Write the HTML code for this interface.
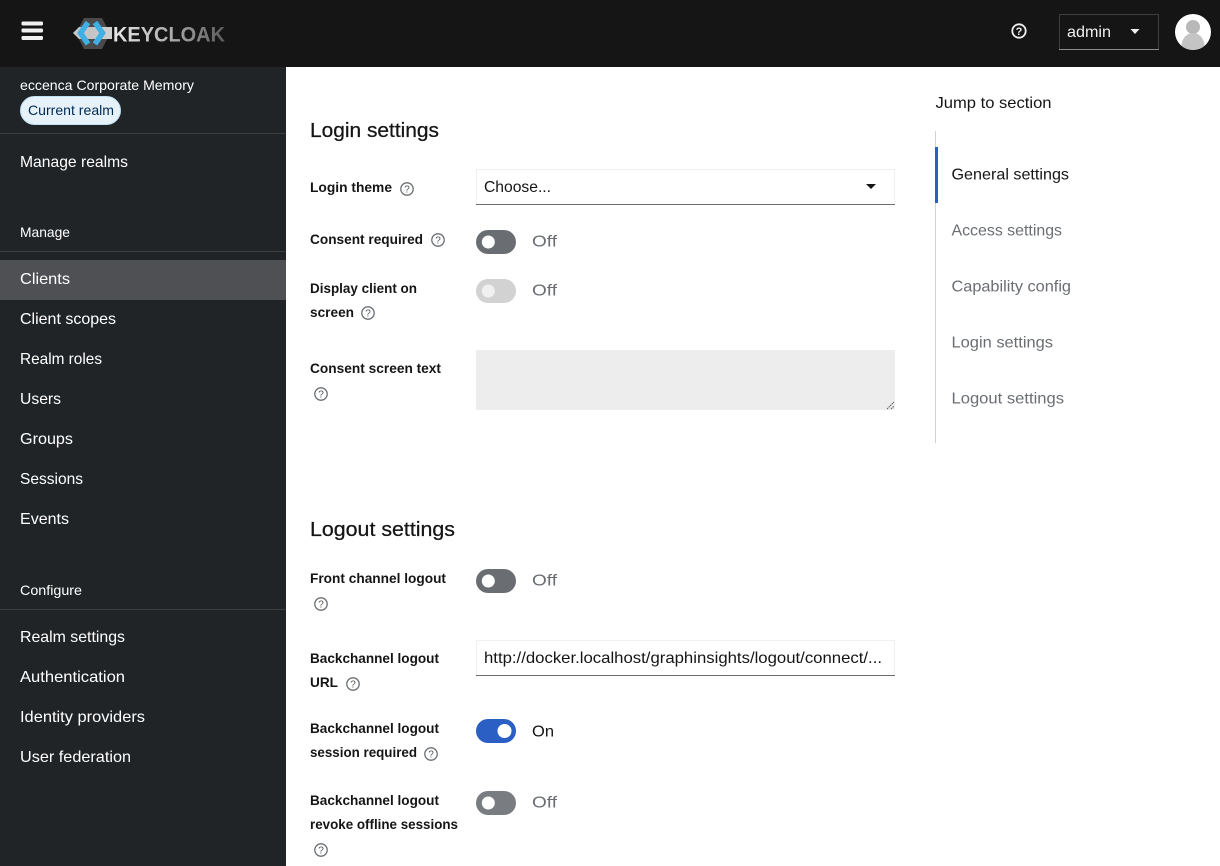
<!DOCTYPE html>
<html lang="en"><head><meta charset="utf-8"><title>Keycloak</title>
<style>
html,body{margin:0;padding:0;width:1220px;height:866px;overflow:hidden;background:#fff}
svg{display:block}
text{font-family:"Liberation Sans",sans-serif;font-size:16px;fill:#151515}
.s text{fill:#fff}
.b text{font-size:14px;font-weight:700}
.h text{font-size:20px;font-weight:400;stroke:#151515;stroke-width:.25px}
.o text{fill:#6a6e73}
.n text{fill:#6a6e73}
.q circle{fill:#fff;stroke:#6a6e73;stroke-width:1.3}
.q text{font-size:10px;font-weight:400;fill:#555;text-anchor:middle}
</style></head><body>
<svg width="1220" height="866" viewBox="0 0 1220 866" xmlns="http://www.w3.org/2000/svg">
<defs>
<linearGradient id="kc" x1="0" x2="1" y1="0" y2="0"><stop offset="0" stop-color="#e8e8e8"/><stop offset=".55" stop-color="#a8a8a8"/><stop offset="1" stop-color="#5a5a5a"/></linearGradient>
<linearGradient id="band" x1="0" x2="1" y1="0" y2="0"><stop offset="0" stop-color="#c8c8c8"/><stop offset=".45" stop-color="#c4c4c4"/><stop offset="1" stop-color="#d0d0d0"/></linearGradient>
<clipPath id="av"><circle cx="1193" cy="32" r="18"/></clipPath>
</defs>

<!-- Page structure -->
<rect x="0" y="67" width="286" height="799" fill="#212427"/>
<rect x="0" y="0" width="1220" height="67" fill="#151515"/>

<!-- Header -->
<g fill="#f0f0f0"><rect x="21.5" y="21.5" width="21.5" height="4" rx="1.2"/><rect x="21.5" y="28.5" width="21.5" height="4" rx="1.2"/><rect x="21.5" y="36" width="21.5" height="4" rx="1.2"/></g>
<path d="M76 33.5L84 18H102L110 33.5L102 49H84Z" fill="#4a4a4a"/>
<path d="M73 33L79 27H112V39H79Z" fill="url(#band)"/>
<path d="M88 22.5L80.5 33L88 44" fill="none" stroke="#3fb0e6" stroke-width="5.5"/>
<path d="M95 22.5L102.5 33L95 44" fill="none" stroke="#3fb0e6" stroke-width="5.5"/>
<text x="113" y="41.5" textLength="112" lengthAdjust="spacingAndGlyphs" style="font-size:21px;font-weight:700;fill:url(#kc)">KEYCLOAK</text>
<circle cx="1019" cy="31" r="6.7" fill="none" stroke="#f0f0f0" stroke-width="1.8"/>
<text x="1019" y="35" text-anchor="middle" style="font-size:11px;font-weight:700;fill:#f0f0f0">?</text>
<rect x="1059.5" y="14.5" width="99" height="35" fill="#151515" stroke="#3c3f42"/>
<rect x="1059" y="49" width="100" height="1" fill="#8a8d90"/>
<text x="1067" y="37" textLength="44" lengthAdjust="spacingAndGlyphs" style="fill:#f0f0f0">admin</text>
<path d="M1130.5 29h9l-4.5 5z" fill="#f0f0f0"/>
<g clip-path="url(#av)"><rect x="1175" y="14" width="36" height="36" fill="#fff"/><circle cx="1193" cy="27" r="7" fill="#b8b8b8"/><ellipse cx="1193" cy="46" rx="11.5" ry="13" fill="#c4c4c4"/></g>

<!-- Sidebar -->
<g fill="#3c3f42"><rect x="0" y="133" width="286" height="1"/><rect x="0" y="251" width="286" height="1"/><rect x="0" y="609" width="286" height="1"/></g>
<rect x="0" y="260" width="286" height="40" fill="#4e5053"/>
<rect x="20.5" y="96.5" width="100" height="28" rx="14" fill="#e7f1fa" stroke="#bee1f4"/>
<text x="28" y="115" textLength="86" lengthAdjust="spacingAndGlyphs" style="font-size:14px;fill:#002952">Current realm</text>
<g class="s">
<text x="20" y="90" textLength="174" lengthAdjust="spacingAndGlyphs" style="font-size:14px">eccenca Corporate Memory</text>
<text x="20" y="167" textLength="108" lengthAdjust="spacingAndGlyphs">Manage realms</text>
<text x="20" y="237" textLength="50" lengthAdjust="spacingAndGlyphs" style="font-size:14px">Manage</text>
<text x="20" y="284" textLength="50" lengthAdjust="spacingAndGlyphs">Clients</text>
<text x="20" y="324" textLength="96" lengthAdjust="spacingAndGlyphs">Client scopes</text>
<text x="20" y="364" textLength="82" lengthAdjust="spacingAndGlyphs">Realm roles</text>
<text x="20" y="404" textLength="41" lengthAdjust="spacingAndGlyphs">Users</text>
<text x="20" y="444" textLength="53" lengthAdjust="spacingAndGlyphs">Groups</text>
<text x="20" y="484" textLength="63" lengthAdjust="spacingAndGlyphs">Sessions</text>
<text x="20" y="524" textLength="49" lengthAdjust="spacingAndGlyphs">Events</text>
<text x="20" y="595" textLength="62" lengthAdjust="spacingAndGlyphs" style="font-size:14px">Configure</text>
<text x="20" y="642" textLength="105" lengthAdjust="spacingAndGlyphs">Realm settings</text>
<text x="20" y="682" textLength="105" lengthAdjust="spacingAndGlyphs">Authentication</text>
<text x="20" y="722" textLength="125" lengthAdjust="spacingAndGlyphs">Identity providers</text>
<text x="20" y="762" textLength="111" lengthAdjust="spacingAndGlyphs">User federation</text>
</g>

<!-- Headings -->
<g class="h">
<text x="310" y="137" textLength="129" lengthAdjust="spacingAndGlyphs">Login settings</text>
<text x="310" y="536" textLength="145" lengthAdjust="spacingAndGlyphs">Logout settings</text>
</g>

<!-- Labels -->
<g class="b">
<text x="310" y="192" textLength="82" lengthAdjust="spacingAndGlyphs">Login theme</text>
<text x="310" y="244" textLength="113" lengthAdjust="spacingAndGlyphs">Consent required</text>
<text x="310" y="293" textLength="107" lengthAdjust="spacingAndGlyphs">Display client on</text>
<text x="310" y="317" textLength="44" lengthAdjust="spacingAndGlyphs">screen</text>
<text x="310" y="373" textLength="131" lengthAdjust="spacingAndGlyphs">Consent screen text</text>
<text x="310" y="583" textLength="136" lengthAdjust="spacingAndGlyphs">Front channel logout</text>
<text x="310" y="663" textLength="129" lengthAdjust="spacingAndGlyphs">Backchannel logout</text>
<text x="310" y="687" textLength="28" lengthAdjust="spacingAndGlyphs">URL</text>
<text x="310" y="733" textLength="129" lengthAdjust="spacingAndGlyphs">Backchannel logout</text>
<text x="310" y="757" textLength="107" lengthAdjust="spacingAndGlyphs">session required</text>
<text x="310" y="805" textLength="129" lengthAdjust="spacingAndGlyphs">Backchannel logout</text>
<text x="310" y="829" textLength="148" lengthAdjust="spacingAndGlyphs">revoke offline sessions</text>
</g>

<!-- Help icons -->
<g class="q">
<circle cx="407" cy="189" r="6.2"/><text x="407" y="192.6">?</text>
<circle cx="438" cy="240" r="6.2"/><text x="438" y="243.6">?</text>
<circle cx="368" cy="313" r="6.2"/><text x="368" y="316.6">?</text>
<circle cx="321" cy="394" r="6.2"/><text x="321" y="397.6">?</text>
<circle cx="321" cy="604" r="6.2"/><text x="321" y="607.6">?</text>
<circle cx="353" cy="684" r="6.2"/><text x="353" y="687.6">?</text>
<circle cx="431" cy="754" r="6.2"/><text x="431" y="757.6">?</text>
<circle cx="321" cy="850" r="6.2"/><text x="321" y="853.6">?</text>
</g>

<!-- Select -->
<rect x="476.5" y="169.5" width="418" height="35" fill="#fff" stroke="#f0f0f0"/>
<rect x="476" y="204" width="419" height="1" fill="#6a6e73"/>
<text x="484" y="192" textLength="67" lengthAdjust="spacingAndGlyphs">Choose...</text>
<path d="M866 184h10l-5 5z" fill="#151515"/>

<!-- Toggles -->
<rect x="476" y="230" width="40" height="24" rx="12" fill="#6a6e73"/><circle cx="488.3" cy="242" r="6.5" fill="#fff"/>
<rect x="476" y="279" width="40" height="24" rx="12" fill="#d2d2d2"/><circle cx="488.3" cy="291" r="6.5" fill="#f0f0f0"/>
<rect x="476" y="569" width="40" height="24" rx="12" fill="#6a6e73"/><circle cx="488.3" cy="581" r="6.5" fill="#fff"/>
<rect x="476" y="719" width="40" height="24" rx="12" fill="#2b5fc4"/><circle cx="504.5" cy="731" r="7" fill="#fff"/>
<rect x="476" y="791" width="40" height="24" rx="12" fill="#797c80"/><circle cx="488.3" cy="803" r="6.5" fill="#fff"/>
<g class="o">
<text x="532" y="246.5" textLength="25" lengthAdjust="spacingAndGlyphs">Off</text>
<text x="532" y="295.5" textLength="25" lengthAdjust="spacingAndGlyphs">Off</text>
<text x="532" y="585.5" textLength="25" lengthAdjust="spacingAndGlyphs">Off</text>
<text x="532" y="807.5" textLength="25" lengthAdjust="spacingAndGlyphs">Off</text>
</g>
<text x="532" y="736.5" textLength="22" lengthAdjust="spacingAndGlyphs">On</text>

<!-- Textarea -->
<rect x="476" y="350" width="419" height="60" fill="#ededed"/>
<path d="M887 409L894 402M891 409L894 406" stroke="#555" stroke-width="1" stroke-dasharray="1.5 .7" fill="none"/>

<!-- URL input -->
<rect x="476.5" y="640.5" width="418" height="35" fill="#fff" stroke="#f0f0f0"/>
<rect x="476" y="675" width="419" height="1" fill="#6a6e73"/>
<text x="484" y="663" textLength="398" lengthAdjust="spacingAndGlyphs">http://docker.localhost/graphinsights/logout/connect/...</text>

<!-- Jump links -->
<text x="935.5" y="108" textLength="116" lengthAdjust="spacingAndGlyphs">Jump to section</text>
<rect x="935" y="131" width="1" height="312" fill="#d2d2d2"/>
<rect x="935" y="147" width="3" height="56" fill="#2b5fc4"/>
<text x="951.5" y="179.5" textLength="117.5" lengthAdjust="spacingAndGlyphs">General settings</text>
<g class="n">
<text x="951.5" y="235.5" textLength="110.5" lengthAdjust="spacingAndGlyphs">Access settings</text>
<text x="951.5" y="291.5" textLength="119.5" lengthAdjust="spacingAndGlyphs">Capability config</text>
<text x="951.5" y="347.5" textLength="101.5" lengthAdjust="spacingAndGlyphs">Login settings</text>
<text x="951.5" y="403.5" textLength="112.5" lengthAdjust="spacingAndGlyphs">Logout settings</text>
</g>
</svg>
</body></html>
